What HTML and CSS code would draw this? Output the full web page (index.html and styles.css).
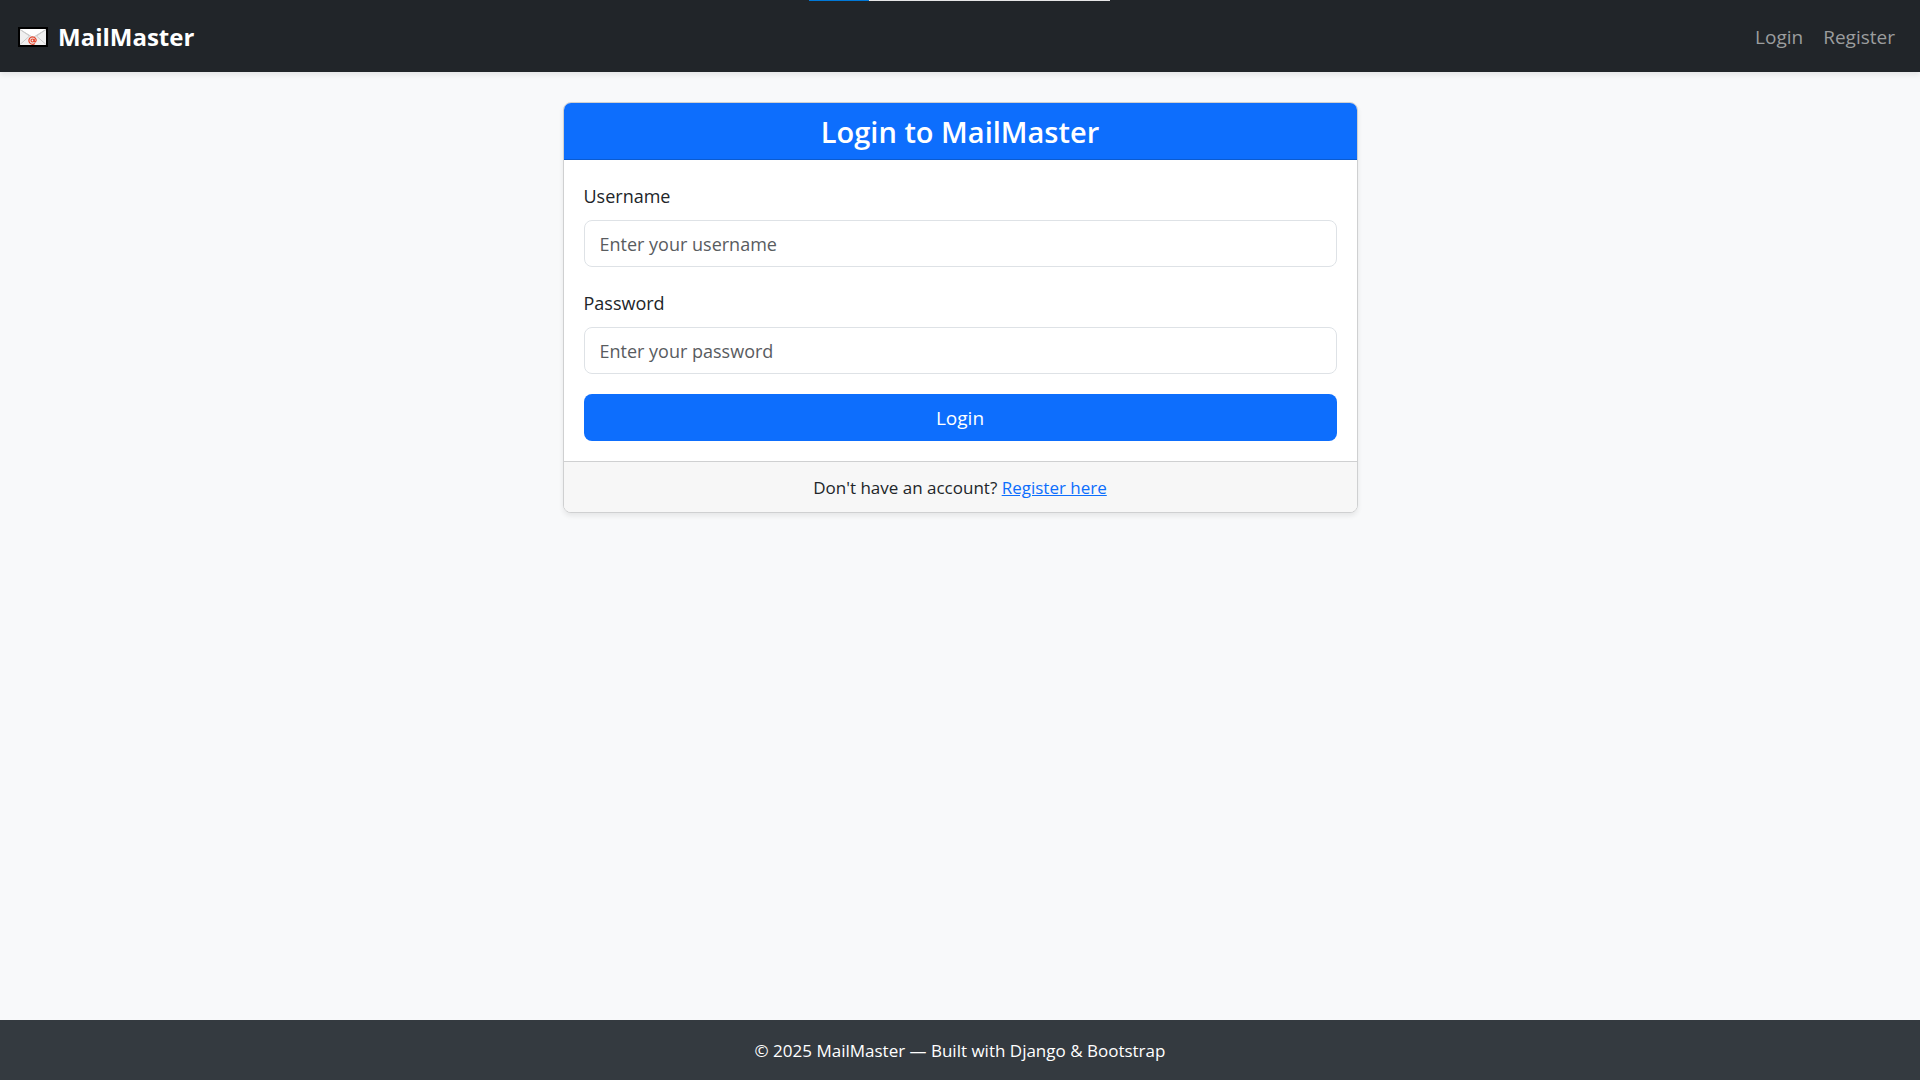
FILE: index.html
```html
<!DOCTYPE html>
<html lang="en">
<head>
  <meta charset="utf-8">
  <meta name="viewport" content="width=device-width, initial-scale=1">
  <title>Login - MailMaster</title>
  <link rel="stylesheet" href="styles.css">
</head>
<body>
  <div class="top-strip" aria-hidden="true"></div>

  <header class="navbar">
    <a class="brand" href="#">
      <svg class="brand-icon" viewBox="0 0 30 20" aria-hidden="true">
        <rect width="30" height="20" fill="#000"/>
        <rect x="2" y="2" width="26" height="16" fill="#f0f0f0"/>
        <path d="M2 2h26L15 10.500z" fill="#fff"/>
        <path d="M2 2.500l9.500 6.500L2 17.500M28 2.500L18.500 9 28 17.500M2 2.500L15 10.500 28 2.500" fill="none" stroke="#cbcbcb" stroke-width="1"/>
        <circle cx="14.500" cy="13.500" r="1.500" fill="none" stroke="#e8452c" stroke-width="1.200"/>
        <path d="M16.200 11.800v2.400q.4 1.200 1.400.5.800-.9.500-2.200A3.700 3.700 0 1 0 16.800 16.600" fill="none" stroke="#e8452c" stroke-width="1.200"/>
      </svg>
      MailMaster
    </a>
    <nav class="nav-links">
      <a class="nav-link" href="#">Login</a>
      <a class="nav-link" href="#">Register</a>
    </nav>
  </header>

  <main class="content">
    <section class="card">
      <h1 class="card-header">Login to MailMaster</h1>
      <form class="card-body">
        <div class="field">
          <label class="label" for="username">Username</label>
          <input class="input" type="text" id="username" name="username" placeholder="Enter your username">
        </div>
        <div class="field">
          <label class="label" for="password">Password</label>
          <input class="input" type="password" id="password" name="password" placeholder="Enter your password">
        </div>
        <button class="button" type="submit">Login</button>
      </form>
      <p class="card-footer">Don't have an account? <a class="link" href="#">Register here</a></p>
    </section>
  </main>

  <footer class="footer">© 2025 MailMaster — Built with Django &amp; Bootstrap</footer>
</body>
</html>
```
FILE: styles.css
```css
* {
  box-sizing: border-box;
}

body {
  display: flex;
  flex-direction: column;
  min-height: 100vh;
  margin: 0;
  background: #f8f9fa;
  color: #212529;
  font-family: "Open Sans", "Noto Sans", sans-serif;
  font-size: 18px;
  line-height: 30px;
}

.top-strip {
  position: absolute;
  top: 0;
  left: 50%;
  width: 301px;
  height: 1px;
  margin-left: -151px;
  background: linear-gradient(to right, #0078d7 60px, #e6e6e6 60px);
}

.navbar {
  display: flex;
  align-items: center;
  justify-content: space-between;
  min-height: 72px;
  padding: 2px 25px 0 18px;
  background: #212529;
  box-shadow: 0 3px 5px rgba(0, 0, 0, 0.075);
}

.brand {
  display: flex;
  align-items: center;
  gap: 10px;
  color: #fff;
  font-size: 24px;
  font-weight: 700;
  text-decoration: none;
}

.brand-icon {
  width: 30px;
  height: 20px;
}

.nav-links {
  display: flex;
  gap: 20px;
  font-size: 19px;
}

.nav-link {
  color: #9b9d9e;
  text-decoration: none;
}

.content {
  flex: 1;
  padding: 30px 15px;
}

.card {
  max-width: 795px;
  margin: 0 auto;
  overflow: hidden;
  background: #fff;
  border: 1px solid #cfd0d1;
  border-radius: 8px;
  box-shadow: 0 3px 5px rgba(0, 0, 0, 0.075);
}

.card-header {
  margin: 0;
  padding: 11px 20px 9px;
  background: #0d6efd;
  border-bottom: 1px solid #0b5bd0;
  color: #fff;
  font-size: 29px;
  font-weight: 600;
  line-height: 36px;
  text-align: center;
}

.card-body {
  display: flex;
  flex-direction: column;
  gap: 20px;
  padding: 20px;
}

.field {
  display: flex;
  flex-direction: column;
  gap: 10px;
}

.label {
  padding-top: 2px;
  line-height: 28px;
}

.input {
  width: 100%;
  height: 47px;
  padding: 0 15px;
  background: #fff;
  border: 1px solid #dee2e6;
  border-radius: 8px;
  color: #212529;
  font: inherit;
}

.input::placeholder {
  color: #595c5f;
  opacity: 1;
}

.button {
  height: 47px;
  background: #0d6efd;
  border: 0;
  border-radius: 8px;
  color: #fff;
  font: inherit;
  font-size: 19px;
}

.card-footer {
  margin: 0;
  padding: 13px 20px 11px;
  background: #f7f7f7;
  border-top: 1px solid #cfd0d1;
  font-size: 17px;
  line-height: 26px;
  text-align: center;
}

.link {
  color: #0d6efd;
}

.footer {
  padding: 16px 15px 14px;
  background: #343a40;
  color: #fff;
  font-size: 17px;
  text-align: center;
}
```
